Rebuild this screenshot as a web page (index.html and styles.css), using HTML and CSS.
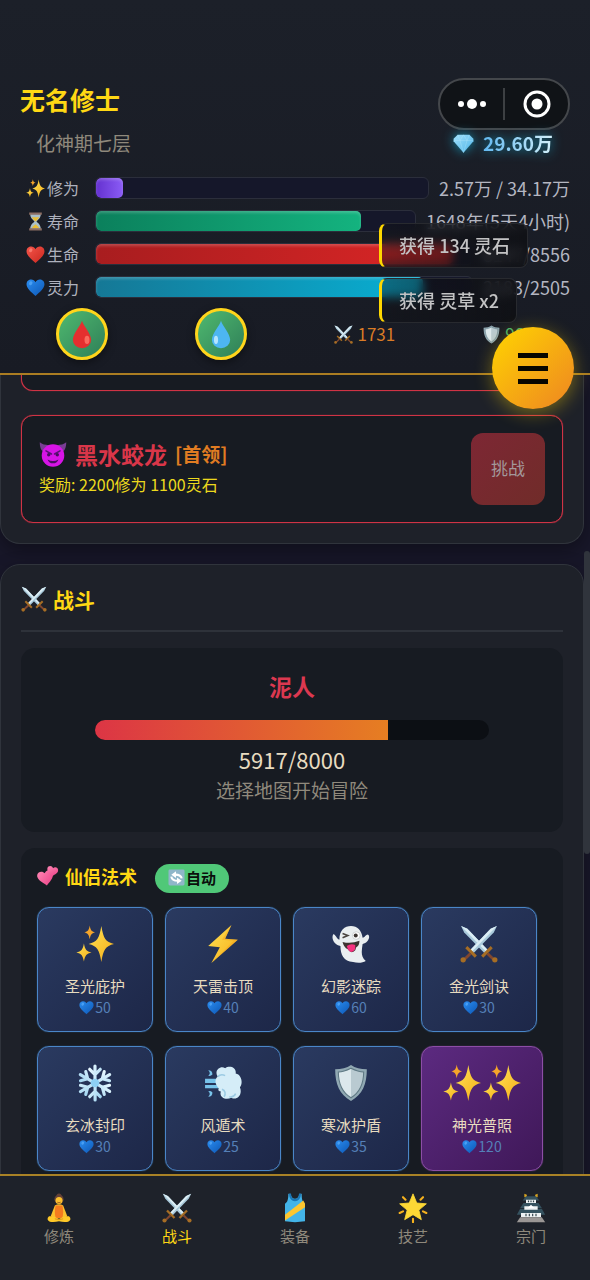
FILE: index.html
```
<!DOCTYPE html>
<html lang="zh-CN">
<head>
    <meta charset="UTF-8">
    <meta name="viewport" content="width=device-width, initial-scale=1.0">
    <title>修仙 - 战斗</title>
    <link rel="stylesheet" href="styles.css">
</head>
<body>
    <!-- 图标库 -->
    <svg class="sprite" width="0" height="0" aria-hidden="true">
        <defs>
            <linearGradient id="g-gold" x1="0" y1="0" x2="1" y2="1"><stop offset="0" stop-color="#ffe255"/><stop offset="1" stop-color="#f5ae18"/></linearGradient>
            <linearGradient id="g-red" x1="0" y1="0" x2="1" y2="1"><stop offset="0" stop-color="#f5554a"/><stop offset="1" stop-color="#c9271f"/></linearGradient>
            <linearGradient id="g-blue" x1="0" y1="0" x2="1" y2="1"><stop offset="0" stop-color="#2b8df0"/><stop offset="1" stop-color="#0d57b5"/></linearGradient>
            <linearGradient id="g-pink" x1="0" y1="0" x2="1" y2="1"><stop offset="0" stop-color="#ff86b4"/><stop offset="1" stop-color="#ea3f86"/></linearGradient>
            <linearGradient id="g-ice" x1="0" y1="0" x2="1" y2="1"><stop offset="0" stop-color="#e8f8ff"/><stop offset="1" stop-color="#a3d6f2"/></linearGradient>
            <linearGradient id="g-gem" x1="0" y1="0" x2="1" y2="1"><stop offset="0" stop-color="#9fe0fb"/><stop offset="1" stop-color="#51b5e8"/></linearGradient>
            <path id="heart-shape" d="M18 34C10 27 1 20 1 12 1 2 14 0 18 8 22 0 35 2 35 12 35 20 26 27 18 34Z"/>
            <path id="spark-shape" d="M0-17C2-5 4-2 12 0 4 2 2 5 0 17-2 5-4 2-12 0-4-2-2-5 0-17Z"/>
        </defs>
        <symbol id="i-sparkles" viewBox="0 0 36 36">
            <g fill="url(#g-gold)">
                <use href="#spark-shape" transform="translate(24 18)"/>
                <use href="#spark-shape" transform="translate(7.500 26) scale(.6 .5)"/>
                <use href="#spark-shape" transform="translate(13 7) scale(.42 .38)" fill="#f5a52a"/>
            </g>
        </symbol>
        <symbol id="i-hourglass" viewBox="0 0 36 36">
            <path d="M8 4H28C28 13 21 16 20 18 21 20 28 23 28 32H8C8 23 15 20 16 18 15 16 8 13 8 4Z" fill="#a9bfc9"/>
            <path d="M11 10H25C23 14 20 16 18 18 16 16 13 14 11 10ZM11 31C13 26 16 25 18 23 20 25 23 26 25 31Z" fill="#e8bd35"/>
            <path d="M6 1H30V5H6ZM6 31H30V35H6Z" fill="#8b6e63"/>
        </symbol>
        <symbol id="i-heart" viewBox="0 0 36 36">
            <use href="#heart-shape" fill="url(#g-red)"/>
            <ellipse cx="9" cy="10" rx="3" ry="4" fill="#ff8d82" opacity=".7" transform="rotate(30 9 10)"/>
        </symbol>
        <symbol id="i-blueheart" viewBox="0 0 36 36">
            <use href="#heart-shape" fill="url(#g-blue)"/>
            <ellipse cx="9" cy="10" rx="3" ry="4" fill="#62b4ff" opacity=".6" transform="rotate(30 9 10)"/>
        </symbol>
        <symbol id="i-hearts" viewBox="0 0 36 36">
            <use href="#heart-shape" fill="url(#g-pink)" transform="translate(-2 10) rotate(-10) scale(.77)"/>
            <use href="#heart-shape" fill="url(#g-pink)" transform="translate(18 -1) rotate(14) scale(.53)"/>
        </symbol>
        <symbol id="i-blood" viewBox="0 0 36 36">
            <path d="M18 2C20 9 29 17 29 25A11 10 0 0 1 7 25C7 17 16 9 18 2Z" fill="#e52f2f"/>
            <ellipse cx="24" cy="25" rx="3" ry="5" fill="#fa6a5e"/>
        </symbol>
        <symbol id="i-water" viewBox="0 0 36 36">
            <path d="M18 2C20 9 29 17 29 25A11 10 0 0 1 7 25C7 17 16 9 18 2Z" fill="#4db6f2"/>
            <ellipse cx="12" cy="25" rx="2.500" ry="5" fill="#b4e5ff"/>
        </symbol>
        <symbol id="i-swords" viewBox="0 0 36 36">
            <g id="sword">
                <path d="M1 1 7 3.500 27 24.500 24 27.500 4 7Z" fill="#a9cadb"/>
                <path d="M1 1 7 3.500 27 24.500 25.500 26Z" fill="#dceef5"/>
                <path d="M29 20 31 22 22 31 20 29Z" fill="#a66d24"/>
                <path d="M27 26 33 32 31.500 34 25 28Z" fill="#80472f"/>
                <circle cx="33" cy="33" r="2.500" fill="#a66d24"/>
            </g>
            <use href="#sword" transform="matrix(-1 0 0 1 36 0)"/>
        </symbol>
        <symbol id="i-shield" viewBox="0 0 36 36">
            <path d="M18 1C22 4 27 5 33 5 33 19 29 29 18 35 7 29 3 19 3 5 9 5 14 4 18 1Z" fill="#91a9b3"/>
            <path d="M18 4C22 6 26 7.500 30 7.500 30 19 26 27 18 32Z" fill="#b9cad1"/>
            <path d="M18 4C14 6 10 7.500 6 7.500 6 19 10 27 18 32Z" fill="#dce8ec"/>
            <path d="M18 4C22 6 26 7.500 30 7.500 30 19 26 27 18 32 10 27 6 19 6 7.500 10 7.500 14 6 18 4Z" fill="none" stroke="#5e7883"/>
        </symbol>
        <symbol id="i-gem" viewBox="0 0 36 36">
            <path d="M8 3H28L35 10V14L18 34 1 14V10Z" fill="url(#g-gem)"/>
            <path d="M8 3 12 13 18 3 24 13 28 3M1 13H35M12 13 18 34 24 13" fill="none" stroke="#c9f0ff" opacity=".4"/>
        </symbol>
        <symbol id="i-devil" viewBox="0 0 36 36">
            <path d="M1 3C4 6 8 6 13 7L6 16C2 13 1 8 1 3ZM35 3C32 6 28 6 23 7L30 16C34 13 35 8 35 3Z" fill="#793d94"/>
            <circle cx="18" cy="20" r="14.500" fill="#d714e6"/>
            <path d="M9 14 16 18M27 14 20 18" stroke="#5c1277" stroke-width="2" stroke-linecap="round"/>
            <circle cx="12.500" cy="19" r="2.200" fill="#4a0d62"/><circle cx="23.500" cy="19" r="2.200" fill="#4a0d62"/>
            <path d="M11 25Q18 29 25 25 23 30 18 30 13 30 11 25Z" fill="#4a0d62"/>
        </symbol>
        <symbol id="i-refresh" viewBox="0 0 36 36">
            <rect x="1" y="1" width="34" height="34" rx="3" fill="#8fb6c9"/>
            <path d="M29 20C28 14 22 12 15 12M7 16C8 22 14 25 21 25" fill="none" stroke="#fff" stroke-width="4.500"/>
            <path d="M17 5V19L7 12ZM19 18V32L29 25Z" fill="#fff"/>
        </symbol>
        <symbol id="i-bolt" viewBox="0 0 36 36">
            <path d="M26 0 4 20 15 21 7 36 32 14 20 13Z" fill="url(#g-gold)"/>
            <path d="M26 0 17 14 28 15 7 36 32 14 20 13Z" fill="#f5a31d" opacity=".5"/>
        </symbol>
        <symbol id="i-ghost" viewBox="0 0 36 36">
            <path d="M7 14C7 5 12 1 18 1S28 5 29 12C31 12 32 9 34 9 37 11 34 17 29 18 28 25 27 30 32 34 29 36 24 36 20 35 11 35 8 28 8 20 3 19-1 14 1 9 3 8 4 13 7 14Z" fill="#e9eef0"/>
            <path d="M10 8 15 10 10 12" fill="none" stroke="#4a4541" stroke-width="1.500"/>
            <circle cx="23" cy="10" r="3.600" fill="#fff" stroke="#b8bfc2" stroke-width=".6"/><circle cx="22.500" cy="10" r="1.900" fill="#3a3532"/>
            <path d="M10 16Q18 18 26 15 26 20 23 21L22 24Q18 28 15 23 11 21 10 16Z" fill="#3e3331"/>
            <path d="M14 20Q18 17 22 19V23Q18 28 15 23Z" fill="#f5317f"/>
        </symbol>
        <symbol id="i-snow" viewBox="0 0 36 36">
            <g fill="none" stroke="url(#g-ice)" stroke-width="3" stroke-linecap="round" stroke-linejoin="round">
                <path id="flake-arm" d="M18 18.100V2M18.100 34V18M13 5 18 10 23 5M13 31 18 26 23 31"/>
                <use href="#flake-arm" transform="rotate(60 18 18)"/>
                <use href="#flake-arm" transform="rotate(120 18 18)"/>
            </g>
            <circle cx="18" cy="18" r="4" fill="#8ed0f5"/>
        </symbol>
        <symbol id="i-wind" viewBox="0 0 36 36">
            <path d="M1 14H17V18H1ZM1 20H17V23H1ZM4 6Q8 6 8 10 6 12 4 11 7 9 4 6ZM4 31Q8 31 8 27 6 25 4 26 7 28 4 31Z" fill="#78c3ea"/>
            <path d="M14 23C10 19 10 14 13 12 9 6 16 1 20 4 24 1 31 3 30 9 36 10 37 19 34 22 37 29 31 35 26 32 20 35 14 31 16 26 14 26 13 25 14 23Z" fill="#d5edf8"/>
            <path d="M17 24C20 25 21 28 19 31M24 31Q28 32 30 28M13 12Q16 9 20 11" fill="none" stroke="#9ccbe4" stroke-width="1.500"/>
        </symbol>
        <symbol id="i-yoga" viewBox="0 0 36 36">
            <circle cx="18" cy="3.500" r="3" fill="#644238"/><circle cx="18" cy="7.500" r="5.500" fill="#644238"/>
            <circle cx="18" cy="9" r="4.200" fill="#fbc02d"/>
            <path d="M13 15Q18 12 23 15L28 28 25 30 11 30 8 28Z" fill="#fbc02d"/>
            <path d="M14 15H22Q24 22 22 30H14Q12 22 14 15Z" fill="#f47b1f"/>
            <path d="M6 28Q11 27 18 31 25 27 30 28 34 32 29 34.500 24 35.500 18 34 12 35.500 7 34.500 2 32 6 28Z" fill="#ffc928"/>
            <path d="M13 31Q18 33 23 31" stroke="#d98b14" fill="none"/>
            <path d="M16 11Q18 12.500 20 11" stroke="#7a3b1c" fill="none" stroke-width=".8"/>
        </symbol>
        <symbol id="i-shirt" viewBox="0 0 36 36">
            <path d="M10 1H13C13 9 23 9 23 1H26C26 8 27 11 30 13V34Q18 36 6 34V13C9 11 10 8 10 1Z" fill="#43b4e8"/>
            <path d="M12 1C12 11 24 11 24 1" fill="none" stroke="#1976b8" stroke-width="2.500"/>
            <path d="M6 26 28 9 30 13V17L6 33Z" fill="#fdc62f"/>
        </symbol>
        <symbol id="i-star" viewBox="0 0 36 36">
            <path d="M18 1 22.500 12 34 13 25 20.500 28 32 18 26 8 32 11 20.500 2 13 13.500 12Z" fill="#fdd835" stroke="#fdd835" stroke-linejoin="round"/>
            <path d="M6 5 9 8M30 5 27 8M2 24 6 22M34 24 30 22M18 31V35" stroke="#f5b11e" stroke-width="2.500" stroke-linecap="round"/>
        </symbol>
        <symbol id="i-castle" viewBox="0 0 36 36">
            <path d="M10 1 13 2V5H10ZM26 1 23 2V5H26Z" fill="#d9a520"/>
            <path d="M12 4H24L28 9H8ZM9 12H27L31 18H5ZM5 19H31L35 26H1Z" fill="#35525f"/>
            <path d="M12 8H24V12H12ZM10 16H26V20H10ZM6 24H30V29H6Z" fill="#eef2f3"/>
            <path d="M18 14 22 18H14Z" fill="#fff"/>
            <path d="M15 9V11M18 9V11M21 9V11M12 25V28M16 25V28M20 25V28M24 25V28" stroke="#33444c" stroke-width="1.400"/>
            <path d="M5 29H31L35 35H1Z" fill="#9b9795"/>
        </symbol>
    </svg>

    <header class="status">
        <div class="status-top">
            <div class="player">
                <h1 class="player-name">无名修士</h1>
                <div class="player-realm">化神期七层</div>
            </div>
            <div class="status-right">
                <div class="capsule">
                    <button type="button" class="capsule-btn" aria-label="更多">
                        <svg width="28" height="12" viewBox="0 0 28 12" fill="#fff"><circle cx="3" cy="6" r="3"/><circle cx="14" cy="6" r="5"/><circle cx="25" cy="6" r="3"/></svg>
                    </button>
                    <span class="capsule-line"></span>
                    <button type="button" class="capsule-btn" aria-label="关闭">
                        <svg width="28" height="28" viewBox="0 0 28 28"><circle cx="14" cy="14" r="12" fill="none" stroke="#fff" stroke-width="3"/><circle cx="14" cy="14" r="5.500" fill="#fff"/></svg>
                    </button>
                </div>
                <div class="gems">
                    <svg class="gems-icon"><use href="#i-gem"/></svg>
                    <span class="gems-value">29.60万</span>
                </div>
            </div>
        </div>

        <div class="stats">
            <div class="stat">
                <span class="stat-label"><svg><use href="#i-sparkles"/></svg>修为</span>
                <div class="bar"><div class="bar-fill bar-exp" style="width: 8%"></div></div>
                <span class="stat-value">2.57万 / 34.17万</span>
            </div>
            <div class="stat">
                <span class="stat-label"><svg><use href="#i-hourglass"/></svg>寿命</span>
                <div class="bar"><div class="bar-fill bar-life" style="width: 83%"></div></div>
                <span class="stat-value">1648年(5天4小时)</span>
            </div>
            <div class="stat">
                <span class="stat-label"><svg><use href="#i-heart"/></svg>生命</span>
                <div class="bar"><div class="bar-fill bar-hp" style="width: 95%"></div></div>
                <span class="stat-value">8147/8556</span>
            </div>
            <div class="stat">
                <span class="stat-label"><svg><use href="#i-blueheart"/></svg>灵力</span>
                <div class="bar"><div class="bar-fill bar-mp" style="width: 87%"></div></div>
                <span class="stat-value">2183/2505</span>
            </div>
        </div>

        <div class="quick">
            <button type="button" class="potion" aria-label="回血丹"><svg><use href="#i-blood"/></svg></button>
            <button type="button" class="potion" aria-label="回灵丹"><svg><use href="#i-water"/></svg></button>
            <span class="attr attr-atk"><svg><use href="#i-swords"/></svg>1731</span>
            <span class="attr attr-def"><svg><use href="#i-shield"/></svg>963</span>
        </div>

        <div class="toasts">
            <div class="toast">获得 134 灵石</div>
            <div class="toast">获得 灵草 x2</div>
        </div>
        <button type="button" class="menu-btn" aria-label="菜单"><span></span><span></span><span></span></button>
    </header>

    <main class="content">
        <section class="card card-bosses">
            <div class="boss boss-cut"></div>
            <div class="boss">
                <div class="boss-info">
                    <h3 class="boss-name"><svg><use href="#i-devil"/></svg>黑水蛟龙 <span class="boss-tag">[首领]</span></h3>
                    <p class="boss-reward">奖励: 2200修为 1100灵石</p>
                </div>
                <button type="button" class="boss-btn" disabled>挑战</button>
            </div>
        </section>

        <section class="card">
            <h2 class="card-title"><svg><use href="#i-swords"/></svg>战斗</h2>

            <div class="panel enemy">
                <h3 class="enemy-name">泥人</h3>
                <div class="enemy-bar"><div class="enemy-fill" style="width: 74.500%"></div></div>
                <div class="enemy-hp">5917/8000</div>
                <div class="enemy-tip">选择地图开始冒险</div>
            </div>

            <div class="panel spells">
                <div class="spells-head">
                    <h3 class="spells-title"><svg><use href="#i-hearts"/></svg>仙侣法术</h3>
                    <button type="button" class="auto-btn"><svg><use href="#i-refresh"/></svg>自动</button>
                </div>
                <div class="spell-list">
                    <button type="button" class="spell">
                        <span class="spell-icon"><svg><use href="#i-sparkles"/></svg></span>
                        <span class="spell-name">圣光庇护</span>
                        <span class="spell-cost"><svg><use href="#i-blueheart"/></svg>50</span>
                    </button>
                    <button type="button" class="spell">
                        <span class="spell-icon"><svg><use href="#i-bolt"/></svg></span>
                        <span class="spell-name">天雷击顶</span>
                        <span class="spell-cost"><svg><use href="#i-blueheart"/></svg>40</span>
                    </button>
                    <button type="button" class="spell">
                        <span class="spell-icon"><svg><use href="#i-ghost"/></svg></span>
                        <span class="spell-name">幻影迷踪</span>
                        <span class="spell-cost"><svg><use href="#i-blueheart"/></svg>60</span>
                    </button>
                    <button type="button" class="spell">
                        <span class="spell-icon"><svg><use href="#i-swords"/></svg></span>
                        <span class="spell-name">金光剑诀</span>
                        <span class="spell-cost"><svg><use href="#i-blueheart"/></svg>30</span>
                    </button>
                    <button type="button" class="spell">
                        <span class="spell-icon"><svg><use href="#i-snow"/></svg></span>
                        <span class="spell-name">玄冰封印</span>
                        <span class="spell-cost"><svg><use href="#i-blueheart"/></svg>30</span>
                    </button>
                    <button type="button" class="spell">
                        <span class="spell-icon"><svg><use href="#i-wind"/></svg></span>
                        <span class="spell-name">风遁术</span>
                        <span class="spell-cost"><svg><use href="#i-blueheart"/></svg>25</span>
                    </button>
                    <button type="button" class="spell">
                        <span class="spell-icon"><svg><use href="#i-shield"/></svg></span>
                        <span class="spell-name">寒冰护盾</span>
                        <span class="spell-cost"><svg><use href="#i-blueheart"/></svg>35</span>
                    </button>
                    <button type="button" class="spell spell-ultimate">
                        <span class="spell-icon"><svg><use href="#i-sparkles"/></svg><svg><use href="#i-sparkles"/></svg></span>
                        <span class="spell-name">神光普照</span>
                        <span class="spell-cost"><svg><use href="#i-blueheart"/></svg>120</span>
                    </button>
                </div>
            </div>
        </section>
        <div class="scroll-thumb"></div>
    </main>

    <nav class="tabs">
        <a href="#cultivate" class="tab"><svg><use href="#i-yoga"/></svg>修炼</a>
        <a href="#battle" class="tab active"><svg><use href="#i-swords"/></svg>战斗</a>
        <a href="#equip" class="tab"><svg><use href="#i-shirt"/></svg>装备</a>
        <a href="#skill" class="tab"><svg><use href="#i-star"/></svg>技艺</a>
        <a href="#sect" class="tab"><svg><use href="#i-castle"/></svg>宗门</a>
    </nav>
</body>
</html>
```
FILE: styles.css
```
* {
    box-sizing: border-box;
    margin: 0;
    padding: 0;
}
body {
    display: flex;
    flex-direction: column;
    height: 100vh;
    overflow: hidden;
    background: #181729;
    color: #e8dcc0;
    font-family: "Noto Sans CJK SC", "Noto Sans", sans-serif;
}
button {
    font-family: inherit;
    border: none;
    cursor: pointer;
}
svg {
    flex: none;
}
.sprite {
    position: absolute;
}

/* 顶部状态栏 */
.status {
    position: relative;
    z-index: 2;
    flex: none;
    padding: 78px 0 13px;
    background: linear-gradient(180deg, #1c2029, #181b24);
    border-bottom: 2px solid #ab7d22;
}
.status-top {
    display: flex;
    justify-content: space-between;
    padding: 0 20px;
}
.player-name {
    font-size: 25px;
    line-height: 42px;
    color: #ffd814;
}
.player-realm {
    margin: 12px 0 0 16px;
    font-size: 19px;
    line-height: 22px;
    color: #8f897c;
}
.capsule {
    display: flex;
    align-items: center;
    width: 132px;
    height: 52px;
    background: #101317;
    border: 2px solid #44474b;
    border-radius: 26px;
}
.capsule-btn {
    flex: 1;
    display: flex;
    justify-content: center;
    background: none;
}
.capsule-line {
    width: 2px;
    height: 32px;
    background: #3d4043;
}
.gems {
    display: flex;
    align-items: center;
    justify-content: flex-end;
    gap: 9px;
    margin: 2px 17px 0 0;
    filter: drop-shadow(0 0 6px #1496b8);
}
.gems-icon {
    width: 21px;
    height: 21px;
}
.gems-value {
    font-size: 19px;
    font-weight: bold;
    line-height: 22px;
    color: transparent;
    background: linear-gradient(90deg, #62b8f0, #d2f0fa);
    -webkit-background-clip: text;
    background-clip: text;
}

.stats {
    display: flex;
    flex-direction: column;
    gap: 11px;
    padding: 0 20px 0 26px;
    margin-top: 23px;
}
.stat {
    display: flex;
    align-items: center;
    height: 22px;
}
.stat-label {
    display: flex;
    align-items: center;
    gap: 2px;
    width: 69px;
    font-size: 16px;
    line-height: 22px;
    color: #aeb1bd;
}
.stat-label svg {
    width: 19px;
    height: 19px;
}
.stat-value {
    margin-left: 10px;
    font-size: 18px;
    line-height: 22px;
    white-space: nowrap;
    color: #b4b6c1;
}
.bar {
    flex: 1;
    height: 22px;
    background: #15172a;
    border: 1px solid #2b2e3b;
    border-radius: 6px;
    overflow: hidden;
}
.bar-fill {
    height: 100%;
    border-radius: 5px;
    box-shadow: inset 0 2px 3px rgba(255, 255, 255, 0.2);
}
.bar-exp {
    background: linear-gradient(90deg, #6431cf, #8b5cf6);
}
.bar-life {
    background: linear-gradient(90deg, #0b805c, #14b37f);
}
.bar-hp {
    background: linear-gradient(90deg, #a81d1f, #dc2626);
}
.bar-mp {
    background: linear-gradient(90deg, #157896, #08b0d4);
}

.quick {
    display: flex;
    align-items: center;
    justify-content: space-around;
    padding: 0 13px;
    margin-top: 10px;
}
.potion {
    display: flex;
    align-items: center;
    justify-content: center;
    width: 52px;
    height: 52px;
    background: linear-gradient(135deg, #4fb96f, #2f7f58);
    border: 3px solid #ffd51c;
    border-radius: 50%;
    box-shadow: 0 3px 8px rgba(0, 0, 0, 0.4);
}
.potion svg {
    width: 30px;
    height: 30px;
}
.attr {
    display: flex;
    align-items: center;
    gap: 4px;
    font-size: 17px;
    line-height: 22px;
}
.attr svg {
    width: 19px;
    height: 19px;
}
.attr-atk {
    color: #d97b26;
}
.attr-def {
    color: #45b36b;
}

/* 提示 */
.toasts {
    position: absolute;
    top: 223px;
    right: 62px;
    display: flex;
    flex-direction: column;
    align-items: flex-start;
    gap: 10px;
}
.toast {
    padding: 0 17px;
    font-size: 18px;
    font-weight: 500;
    line-height: 43px;
    color: #c3c3c4;
    background: linear-gradient(90deg, rgba(14, 15, 19, 0.4), rgba(14, 15, 19, 0.8));
    border: 1px solid #282a2f;
    border-left: 3px solid #ffd700;
    border-radius: 8px;
    backdrop-filter: blur(5px);
}
.menu-btn {
    position: absolute;
    right: 16px;
    bottom: -36px;
    display: flex;
    flex-direction: column;
    align-items: center;
    justify-content: center;
    gap: 8px;
    width: 82px;
    height: 82px;
    background: linear-gradient(135deg, #ffd500, #ee8522);
    border-radius: 50%;
    box-shadow: 0 4px 18px rgba(255, 215, 0, 0.4);
}
.menu-btn span {
    width: 30px;
    height: 5px;
    background: #080600;
}

/* 内容区 */
.content {
    position: relative;
    flex: 1;
    min-height: 0;
    padding-right: 6px;
    overflow: hidden;
}
.card {
    padding: 20px;
    margin-bottom: 20px;
    background: #1e2129;
    border: 1px solid #30343c;
    border-radius: 20px;
    box-shadow: 0 6px 18px rgba(0, 0, 0, 0.35);
}
.card-bosses {
    padding-top: 0;
    border-top: none;
    border-radius: 0 0 20px 20px;
}
.boss {
    display: flex;
    align-items: center;
    justify-content: space-between;
    padding: 17px;
    background: #171b22;
    border: 1px solid #cf3345;
    border-radius: 12px;
    box-shadow: 0 0 1px #cf3345;
}
.boss-cut {
    padding: 0 0 15px;
    margin-bottom: 24px;
    border-top: none;
    border-radius: 0 0 12px 12px;
}
.boss-name {
    display: flex;
    align-items: center;
    gap: 8px;
    font-size: 23px;
    line-height: 32px;
    color: #d93649;
}
.boss-name svg {
    width: 28px;
    height: 28px;
}
.boss-tag {
    font-size: 19px;
    color: #e07c22;
}
.boss-reward {
    margin-bottom: 2px;
    font-size: 16px;
    line-height: 28px;
    color: #ecd91d;
}
.boss-btn {
    width: 74px;
    height: 72px;
    font-size: 17px;
    line-height: 22px;
    padding-bottom: 2px;
    color: #a3989b;
    background: linear-gradient(135deg, #7d2734, #702c29);
    border-radius: 12px;
}
.card-title {
    display: flex;
    align-items: center;
    gap: 6px;
    padding-bottom: 17px;
    margin-bottom: 16px;
    font-size: 21px;
    line-height: 28px;
    color: #ffd814;
    border-bottom: 2px solid #2e323a;
}
.card-title svg {
    width: 26px;
    height: 26px;
}
.panel {
    padding: 16px;
    background: #171b22;
    border-radius: 14px;
}

.enemy {
    padding: 24px 25px 25px;
    margin-bottom: 16px;
    text-align: center;
}
.enemy-name {
    font-size: 23px;
    line-height: 28px;
    color: #dc3850;
}
.enemy-bar {
    width: 80%;
    height: 20px;
    margin: 20px auto 6px;
    background: #0c0f14;
    border-radius: 10px;
    overflow: hidden;
}
.enemy-fill {
    height: 100%;
    background: linear-gradient(90deg, #dc3545, #e67e22);
}
.enemy-hp {
    font-size: 22px;
    line-height: 26px;
}
.enemy-tip {
    font-size: 19px;
    line-height: 35px;
    color: #8f897c;
}

.spells-head {
    display: flex;
    align-items: flex-start;
    gap: 18px;
    margin-bottom: 14px;
}
.spells-title {
    display: flex;
    align-items: center;
    gap: 6px;
    font-size: 18px;
    line-height: 24px;
    color: #ffd814;
}
.spells-title svg {
    width: 22px;
    height: 22px;
}
.auto-btn {
    display: flex;
    align-items: center;
    height: 29px;
    padding: 0 13px 2px;
    font-size: 15px;
    font-weight: bold;
    line-height: 27px;
    color: #0a0f0c;
    background: #50c878;
    border-radius: 15px;
}
.auto-btn svg {
    width: 17px;
    height: 17px;
    margin-right: 1px;
}
.spell-list {
    display: flex;
    flex-wrap: wrap;
    gap: 14px 12px;
}
.spell {
    display: flex;
    flex-direction: column;
    align-items: center;
    min-width: 116px;
    padding: 17px 21px 15px;
    color: #e8dcc0;
    background: linear-gradient(135deg, #2a3a60, #1d2748);
    border: 1px solid #4a86c8;
    border-radius: 12px;
    box-shadow: 0 0 1px #4a86c8;
}
.spell-ultimate {
    background: linear-gradient(135deg, #5c2a80, #3f1858);
    border-color: #8c4ea6;
    box-shadow: 0 0 1px #8c4ea6;
}
.spell-icon {
    display: flex;
    gap: 2px;
    padding-bottom: 11px;
}
.spell-icon svg {
    width: 38px;
    height: 38px;
}
.spell-name {
    font-size: 15px;
    line-height: 24px;
}
.spell-cost {
    display: flex;
    align-items: center;
    gap: 1px;
    font-size: 14px;
    line-height: 18px;
    color: #5580b8;
}
.spell-cost svg {
    width: 15px;
    height: 15px;
}
.scroll-thumb {
    position: absolute;
    top: 22%;
    right: 0;
    width: 6px;
    height: 38%;
    background: #30343c;
    border-radius: 3px;
}

/* 底部导航 */
.tabs {
    position: relative;
    z-index: 2;
    flex: none;
    display: flex;
    padding: 17px 0 33px;
    background: #1e222a;
    border-top: 2px solid #a98226;
}
.tab {
    flex: 1;
    display: flex;
    flex-direction: column;
    align-items: center;
    gap: 2px;
    font-size: 15px;
    line-height: 22px;
    color: #8f897c;
    text-decoration: none;
}
.tab svg {
    width: 30px;
    height: 30px;
}
.tab.active {
    color: #ffd814;
}
```
